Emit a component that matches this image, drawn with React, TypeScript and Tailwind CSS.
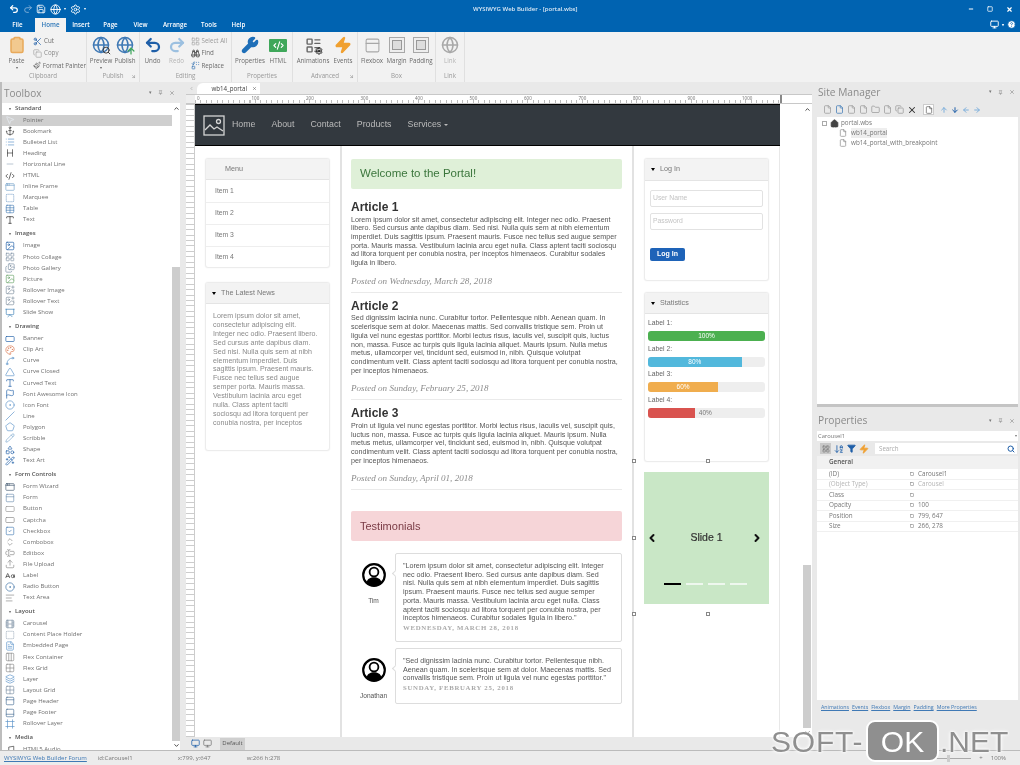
import React from "react";
import {
  MousePointer2, Anchor, List, Heading, Minus, CodeXml, AppWindow, Table, Type, Image as ImageIcon, Images, LayoutGrid, ImagePlus, Presentation,
  RectangleHorizontal, Palette, Spline, Pentagon, Flag, CircleDot, Slash, Triangle, Pencil, Shapes, WandSparkles, SquareCheck, ChevronsUpDown, TextCursorInput,
  Upload, CaseSensitive, Text, Columns3, Grid2x2, Layers, PanelTop, PanelBottom, Music, Scissors, Copy, Paintbrush, Clipboard, Globe, Search, ArrowUp, Undo2, Redo2,
  Binoculars, Replace, Wrench, Zap, House, File, Folder, X, ArrowDown, ArrowLeft, ArrowRight, Square, CircleHelp, ChevronLeft, ChevronRight, Monitor, Save, Settings,
  Filter, ArrowDownAZ, LayoutList, Pin, ChevronDown, ChevronUp, SquareDashed, Film, FileText, BoxSelect, Frame, ArrowDownRight,
} from "lucide-react";

const blue = "#1f5fa8";
const groups: { name: string; items: [string, any, string][] }[] = [
  { name: "Standard", items: [["Pointer", MousePointer2, "#e8eef5"], ["Bookmark", Anchor, "#333"], ["Bulleted List", List, "#5b93c9"], ["Heading", Heading, "#333"], ["Horizontal Line", Minus, "#9ab"], ["HTML", CodeXml, "#222"], ["Inline Frame", AppWindow, "#7aa6cc"], ["Marquee", BoxSelect, "#4a7fb5"], ["Table", Table, "#4a7fb5"], ["Text", Type, "#222"]] },
  { name: "Images", items: [["Image", ImageIcon, blue], ["Photo Collage", LayoutGrid, "#7b8fa3"], ["Photo Gallery", Images, "#7b8fa3"], ["Picture", ImageIcon, "#6aa56a"], ["Rollover Image", ImagePlus, "#7f8f9f"], ["Rollover Text", ImagePlus, "#7f8f9f"], ["Slide Show", Presentation, "#3b7fb5"]] },
  { name: "Drawing", items: [["Banner", RectangleHorizontal, blue], ["Clip Art", Palette, "#d9734a"], ["Curve", Spline, "#5b93c9"], ["Curve Closed", Triangle, "#5b93c9"], ["Curved Text", Type, blue], ["Font Awesome Icon", Flag, blue], ["Icon Font", CircleDot, "#5b93c9"], ["Line", Slash, "#5b93c9"], ["Polygon", Pentagon, "#5b93c9"], ["Scribble", Pencil, "#7aa6cc"], ["Shape", Shapes, blue], ["Text Art", WandSparkles, blue]] },
  { name: "Form Controls", items: [["Form Wizard", AppWindow, "#4a5f75"], ["Form", PanelTop, "#6f8fb0"], ["Button", RectangleHorizontal, "#999"], ["Captcha", RectangleHorizontal, "#888"], ["Checkbox", SquareCheck, "#4a7fb5"], ["Combobox", ChevronsUpDown, "#888"], ["Editbox", TextCursorInput, "#888"], ["File Upload", Upload, "#888"], ["Label", CaseSensitive, "#333"], ["Radio Button", CircleDot, "#3b6fa5"], ["Text Area", Text, "#888"]] },
  { name: "Layout", items: [["Carousel", Film, "#7b8fa3"], ["Content Place Holder", SquareDashed, "#7b8fa3"], ["Embedded Page", FileText, "#5b93c9"], ["Flex Container", Columns3, "#888"], ["Flex Grid", Grid2x2, "#888"], ["Layer", Layers, "#5b93c9"], ["Layout Grid", Grid2x2, "#7b8fa3"], ["Page Header", PanelTop, "#4a6f95"], ["Page Footer", PanelBottom, "#4a6f95"], ["Rollover Layer", Frame, "#5b93c9"]] },
  { name: "Media", items: [["HTML5 Audio", Music, "#333"]] },
];

function Toolbox() {
  return (
    <div className="flex h-full w-[180px] shrink-0 flex-col border-l-2 border-[#bdbdbd] font-['Open_Sans',sans-serif]">
      <PanelHead title="Toolbox" h="h-[21px]" size="text-[10px]" />
      <div className="flex min-h-0 flex-1">
        <div className="min-w-0 flex-1 overflow-hidden bg-white">
          {groups.map((g, gi) => (
            <div key={g.name}>
              <div className={`flex items-center pl-[7px] text-[6px] font-semibold text-[#555] ${gi === 0 ? "h-[11.5px]" : "h-[15px] pt-[2px]"}`}>
                <span className="mr-[4px] text-[4px] text-[#777]">▾</span>
                {g.name}
              </div>
              {g.items.map(([n, I, c]) => (
                <div key={n} className={`flex h-[11.1px] items-center pl-[3px] text-[6px] text-[#707070] ${n === "Pointer" ? "bg-[#cfcfcf]" : ""}`}>
                  <I size={10} color={c} strokeWidth={1.6} className="mr-[8px] shrink-0" />
                  {n}
                </div>
              ))}
            </div>
          ))}
        </div>
        <VScroll thumb="h-[164px]" />
      </div>
    </div>
  );
}

function VScroll({ thumb }: { thumb: string }) {
  return (
    <div className="flex w-[8px] shrink-0 flex-col bg-[#cdcdcd]">
      <div className={`flex flex-col items-center bg-white pt-[2px] ${thumb}`}>
        <ChevronUp size={7} strokeWidth={3} color="#333" />
      </div>
      <div className="flex-1" />
      <div className="flex h-[9px] items-center justify-center bg-white">
        <ChevronDown size={7} strokeWidth={3} color="#333" />
      </div>
    </div>
  );
}

function PanelHead({ title, h, size }: { title: string; h: string; size: string }) {
  return (
    <div className={`flex shrink-0 items-center justify-between pl-[2px] pr-[5px] ${h}`}>
      <span className={`leading-none text-[#8a8a8a] ${size}`}>{title}</span>
      <span className="flex items-center gap-[6px] text-[#777]">
        <span className="text-[5px]">▾</span>
        <Pin size={5} strokeWidth={2} />
        <X size={6} strokeWidth={2} />
      </span>
    </div>
  );
}

function Big({ label, w, children, muted, caret }: { label: string; w: string; children: React.ReactNode; muted?: boolean; caret?: boolean }) {
  return (
    <div className={`flex shrink-0 flex-col items-center ${w}`}>
      <div className="flex h-[20px] items-center justify-center">{children}</div>
      <div className={`mt-[1px] whitespace-nowrap text-[6.2px] leading-[9px] ${muted ? "text-[#b5b5b5]" : "text-[#6b6b6b]"}`}>{label}</div>
      {caret && <div className="text-[4px] leading-[5px] text-[#666]">▾</div>}
    </div>
  );
}

function Group({ label, w, children, launch }: { label: string; w: string; children: React.ReactNode; launch?: boolean }) {
  return (
    <div className={`relative flex shrink-0 flex-col border-r border-[#e0e0e0] ${w}`}>
      <div className="flex h-[39px] justify-center pt-[3px]">{children}</div>
      <div className="text-center text-[6.2px] leading-[9px] text-[#999]">{label}</div>
      {launch && <ArrowDownRight size={5} color="#777" strokeWidth={2} className="absolute bottom-[3px] right-[3px]" />}
    </div>
  );
}

function Ribbon() {
  return (
    <div className="flex h-[50px] shrink-0 bg-[#f2f2f2] font-['Open_Sans',sans-serif]">
      <Group label="Clipboard" w="w-[87px]">
        <Big label="Paste" w="w-[33px]" caret><Clipboard size={18} color="#e8a95a" fill="#f2c98f" /></Big>
        <div className="w-[53px] text-[6.2px] leading-[12.3px] text-[#6b6b6b]">
          <div className="flex items-center gap-[2px]"><Scissors size={9} color={blue} />Cut</div>
          <div className="flex items-center gap-[2px] text-[#8a8a8a]"><Copy size={9} color="#aaa" />Copy</div>
          <div className="flex items-center gap-[2px] whitespace-nowrap"><Paintbrush size={9} color="#555" />Format Painter</div>
        </div>
      </Group>
      <Group label="Publish" w="w-[53px]" launch>
        <Big label="Preview" w="w-[24px]" caret>
          <span className="relative"><Globe size={18} color="#3f79b5" /><Search size={9} color="#333" strokeWidth={2.5} className="absolute -bottom-[1px] -right-[1px]" /></span>
        </Big>
        <Big label="Publish" w="w-[24px]">
          <span className="relative"><Globe size={18} color="#3f79b5" /><ArrowUp size={10} color="#3fa75a" strokeWidth={3} className="absolute -bottom-[2px] -right-[2px]" /></span>
        </Big>
      </Group>
      <Group label="Editing" w="w-[92px]">
        <Big label="Undo" w="w-[24px]"><Undo2 size={18} color="#1f5fa8" strokeWidth={3} /></Big>
        <Big label="Redo" w="w-[24px]" muted><Redo2 size={18} color="#9cc0e0" strokeWidth={3} /></Big>
        <div className="ml-[2px] w-[40px] text-[6.2px] leading-[12.3px] text-[#6b6b6b]">
          <div className="flex items-center gap-[2px] whitespace-nowrap text-[#9a9a9a]"><LayoutGrid size={9} color="#aaa" />Select All</div>
          <div className="flex items-center gap-[2px]"><Binoculars size={9} color="#333" />Find</div>
          <div className="flex items-center gap-[2px]"><Replace size={9} color="#3f79b5" />Replace</div>
        </div>
      </Group>
      <Group label="Properties" w="w-[61px]">
        <Big label="Properties" w="w-[32px]"><Wrench size={18} color="#1f6fb8" fill="#1f6fb8" /></Big>
        <Big label="HTML" w="w-[24px]">
          <span className="flex h-[13px] w-[18px] items-center justify-center rounded-[1px] bg-[#3fa75a]"><CodeXml size={11} color="white" strokeWidth={2.5} /></span>
        </Big>
      </Group>
      <Group label="Advanced" w="w-[65px]" launch>
        <Big label="Animations" w="w-[36px]">
          <span className="relative"><LayoutList size={17} color="#666" /><Settings size={8} color="#222" strokeWidth={3} className="absolute -bottom-[1px] -right-[1px]" /></span>
        </Big>
        <Big label="Events" w="w-[24px]"><Zap size={18} color="#f0a030" fill="#f0a030" /></Big>
      </Group>
      <Group label="Box" w="w-[78px]">
        <Big label="Flexbox" w="w-[25px]"><PanelTop size={17} color="#a8a8a8" strokeWidth={1.5} /></Big>
        <Big label="Margin" w="w-[24px]"><span className="flex h-[16px] w-[16px] items-center justify-center border border-[#a8a8a8] bg-[#eee]"><span className="h-[10px] w-[10px] border border-[#999] bg-[#ddd]" /></span></Big>
        <Big label="Padding" w="w-[25px]"><span className="flex h-[16px] w-[16px] items-center justify-center border border-[#a8a8a8] bg-[#eee]"><span className="h-[10px] w-[10px] border border-[#999] bg-[#ddd]" /></span></Big>
      </Group>
      <Group label="Link" w="w-[29px]">
        <Big label="Link" w="w-[24px]" muted><Globe size={18} color="#a8a8a8" /></Big>
      </Group>
      <div className="flex-1" />
    </div>
  );
}

function TitleBar() {
  const tabs: [string, string][] = [["Insert", "w-[30px]"], ["Page", "w-[29px]"], ["View", "w-[31px]"], ["Arrange", "w-[38px]"], ["Tools", "w-[30px]"], ["Help", "w-[29px]"]];
  return (
    <div className="h-[32px] shrink-0 bg-[#0063b1] font-['Open_Sans',sans-serif] text-white">
      <div className="relative flex h-[18px] items-center pl-[9px]">
        <span className="flex items-center gap-[3.500px]">
          <Undo2 size={10} strokeWidth={3} />
          <Redo2 size={10} strokeWidth={2} color="#8fb8dc" />
          <Save size={10} strokeWidth={2} />
          <Globe size={11} strokeWidth={2} />
          <span className="text-[4px]">▾</span>
          <Settings size={11} strokeWidth={2} />
          <span className="text-[4px]">▾</span>
        </span>
        <span className="absolute left-[473px] top-[5px] whitespace-nowrap text-[6px] font-semibold leading-[9px] text-[#dce9f5]">WYSIWYG Web Builder - [portal.wbs]</span>
        <span className="ml-auto mr-[7px] flex items-center gap-[13px]">
          <Minus size={6} strokeWidth={4} />
          <Square size={6} strokeWidth={3} />
          <X size={7} strokeWidth={4} />
        </span>
      </div>
      <div className="flex h-[14px] items-end text-[6.2px] font-semibold">
        <div className="flex h-[14px] w-[35px] items-center justify-center">File</div>
        <div className="flex h-[14px] w-[31px] items-center justify-center bg-[#f2f2f2] text-[#2f78b8]">Home</div>
        {tabs.map(([t, w]) => (
          <div key={t} className={`flex h-[14px] items-center justify-center ${w}`}>{t}</div>
        ))}
        <span className="ml-auto mr-[4px] flex items-center gap-[3px] pb-[3px]">
          <Monitor size={9} strokeWidth={2.5} />
          <span className="text-[4px]">▾</span>
          <CircleHelp size={9} fill="white" color="#0063b1" strokeWidth={2} />
        </span>
      </div>
    </div>
  );
}

function Ruler() {
  const nums = [0, 100, 200, 300, 400, 500, 600, 700, 800, 900, 1000];
  return (
    <div className="flex h-[10px] shrink-0 border-y border-[#c8c8c8] bg-white">
      <div className="w-[9px] shrink-0 bg-[#eee]" />
      <div className="relative flex w-[585px] shrink-0 bg-[repeating-linear-gradient(90deg,#bbb_0,#bbb_1px,transparent_1px,transparent_5.45px)] bg-[length:100%_3px] bg-bottom bg-no-repeat pl-[2px]">
        {nums.map((n) => (
          <span key={n} className="w-[54.5px] shrink-0 text-[4.5px] leading-[6px] text-[#777]">{n}</span>
        ))}
      </div>
      <div className="h-full w-[2px] bg-[#888]" />
    </div>
  );
}

function Lines({ lines, className }: { lines: string[]; className?: string }) {
  return (
    <div className={className}>
      {lines.map((l) => (
        <div key={l} className="whitespace-nowrap">{l}</div>
      ))}
    </div>
  );
}

function Caret() {
  return <span className="mr-[5px] inline-block h-0 w-0 border-x-[2.5px] border-t-[3px] border-x-transparent border-t-black" />;
}

function Panel({ title, caret, h, head, className, children }: { title: string; caret?: boolean; h: string; head: string; className?: string; children: React.ReactNode }) {
  return (
    <div className={`w-[125px] overflow-hidden rounded-[3px] border border-[#ececec] shadow-[0_0_1px_#ddd] ${h} ${className ?? ""}`}>
      <div className={`flex items-center border-b border-[#e4e4e4] bg-[#f3f3f3] text-[7.2px] text-[#777] ${head} ${caret ? "pl-[6px]" : "pl-[19px]"}`}>
        {caret && <Caret />}
        {title}
      </div>
      {children}
    </div>
  );
}

function Article({ title, body, date }: { title: string; body: string[]; date: string }) {
  return (
    <div>
      <div className="h-[14px] text-[12px] font-bold leading-[14px] text-[#333]">{title}</div>
      <Lines lines={body} className="mt-[1.6px] text-[7.15px] leading-[8.7px] text-[#555]" />
      <div className="mt-[8px] h-[10px] font-['Liberation_Serif',serif] text-[9.1px] italic leading-[10px] text-[#8c8c8c]">{date}</div>
      <div className="mt-[6px] h-px bg-[#eaeaea]" />
      <div className="h-[6px]" />
    </div>
  );
}

function Avatar() {
  return (
    <svg width="24" height="24" viewBox="0 0 24 24">
      <circle cx="12" cy="12" r="10.800" fill="white" stroke="black" strokeWidth="2.200" />
      <circle cx="12" cy="9" r="4.400" fill="white" stroke="black" strokeWidth="1.800" />
      <path d="M4.500 19.200c1-3.600 4-5 7.500-5s6.500 1.400 7.500 5A10.500 10.500 0 0 1 4.500 19.200z" fill="black" />
    </svg>
  );
}

function Testimonial({ name, cardH, body, date }: { name: string; cardH: string; body: string[]; date: string }) {
  return (
    <div className="flex">
      <div className="flex w-[44px] shrink-0 flex-col items-center pl-[1px] pt-[10px]">
        <Avatar />
        <div className="mt-[9px] text-[6.6px] leading-[9px] text-[#555]">{name}</div>
      </div>
      <div className={`relative w-[227px] rounded-[2px] border border-[#ddd] pl-[7px] pt-[8px] ${cardH}`}>
        <span className="absolute -left-[3px] top-[17px] h-[5px] w-[5px] rotate-45 border-b border-l border-[#ddd] bg-white" />
        <Lines lines={body} className="text-[7.15px] leading-[8.7px] text-[#555]" />
        <div className="font-['Liberation_Serif',serif] text-[6.8px] font-bold uppercase leading-[10px] tracking-[0.7px] text-[#aaa]">{date}</div>
      </div>
    </div>
  );
}

function Handle({ className }: { className: string }) {
  return <span className={`absolute h-[4px] w-[4px] border border-[#888] bg-white ${className}`} />;
}

function Bar({ label, pct, color, text, textOut }: { label: string; pct: string; color: string; text: string; textOut?: boolean }) {
  return (
    <div className="mb-[1.5px]">
      <div className="h-[14px] text-[6.8px] leading-[12px] text-[#666]">{label}</div>
      <div className="relative flex h-[10px] overflow-hidden rounded-[3px] bg-[#eeeeee]">
        <div className={`flex items-center justify-center text-[6.5px] text-white ${color} ${pct}`}>{!textOut && text}</div>
        {textOut && <div className="pl-[4px] text-[6.5px] leading-[10px] text-[#777]">{text}</div>}
      </div>
    </div>
  );
}

function Page() {
  const items = ["Home", "About", "Contact", "Products"];
  return (
    <div className="relative flex h-full w-[608px] shrink-0 flex-col bg-white font-['Liberation_Sans',Arial,sans-serif]">
      <div className="flex h-[42px] w-[585px] shrink-0 items-center border-y border-black bg-[#33393f] pl-[8px] text-[8.8px] text-[#bcbcbc]">
        <svg width="22" height="21" viewBox="0 0 22 21" className="mr-[7px]" fill="none" stroke="#d5d5d5" strokeWidth="1.300">
          <rect x="1" y="1" width="20" height="19" />
          <circle cx="15.500" cy="6.500" r="2" />
          <path d="M2 15l5-5 4 4 3-2 6 4" />
        </svg>
        {items.map((t, i) => (
          <span key={t} className={i === 0 ? "" : "ml-[16px]"}>{t}</span>
        ))}
        <span className="ml-[16px]">Services</span>
        <span className="ml-[3px] h-0 w-0 border-x-[2px] border-t-[2.5px] border-x-transparent border-t-[#bbb]" />
      </div>
      <div className="flex min-h-0 w-[585px] flex-1">
        <div className="w-[145px] shrink-0 pl-[10px] pt-[12px]">
          <Panel title="Menu" h="h-[110px]" head="h-[21px]">
            {["Item 1", "Item 2", "Item 3", "Item 4"].map((t, i) => (
              <div key={t} className={`flex h-[22px] items-center pl-[9px] text-[6.8px] text-[#777] ${i ? "border-t border-[#eee]" : ""}`}>{t}</div>
            ))}
          </Panel>
          <Panel title="The Latest News" caret h="h-[169px]" head="h-[21px]" className="mt-[14px]">
            <Lines
              className="px-[7px] pt-[8px] text-[7.100px] leading-[8.900px] text-[#8a8a8a]"
              lines={["Lorem ipsum dolor sit amet,", "consectetur adipiscing elit.", "Integer nec odio. Praesent libero.", "Sed cursus ante dapibus diam.", "Sed nisi. Nulla quis sem at nibh", "elementum imperdiet. Duis", "sagittis ipsum. Praesent mauris.", "Fusce nec tellus sed augue", "semper porta. Mauris massa.", "Vestibulum lacinia arcu eget", "nulla. Class aptent taciti", "sociosqu ad litora torquent per", "conubia nostra, per inceptos"]}
            />
          </Panel>
        </div>
        <div className="w-[294px] shrink-0 border-x-2 border-[#e2e2e2] pl-[9px] pr-[10px] pt-[13px]">
          <div className="flex h-[30px] items-center rounded-[2px] bg-[#dff0d8] pl-[9px] text-[11.500px] text-[#3c763d]">Welcome to the Portal!</div>
          <div className="h-[11px]" />
          <Article
            title="Article 1"
            date="Posted on Wednesday, March 28, 2018"
            body={["Lorem ipsum dolor sit amet, consectetur adipiscing elit. Integer nec odio. Praesent", "libero. Sed cursus ante dapibus diam. Sed nisi. Nulla quis sem at nibh elementum", "imperdiet. Duis sagittis ipsum. Praesent mauris. Fusce nec tellus sed augue semper", "porta. Mauris massa. Vestibulum lacinia arcu eget nulla. Class aptent taciti sociosqu", "ad litora torquent per conubia nostra, per inceptos himenaeos. Curabitur sodales", "ligula in libero."]}
          />
          <Article
            title="Article 2"
            date="Posted on Sunday, February 25, 2018"
            body={["Sed dignissim lacinia nunc. Curabitur tortor. Pellentesque nibh. Aenean quam. In", "scelerisque sem at dolor. Maecenas mattis. Sed convallis tristique sem. Proin ut", "ligula vel nunc egestas porttitor. Morbi lectus risus, iaculis vel, suscipit quis, luctus", "non, massa. Fusce ac turpis quis ligula lacinia aliquet. Mauris ipsum. Nulla metus", "metus, ullamcorper vel, tincidunt sed, euismod in, nibh. Quisque volutpat", "condimentum velit. Class aptent taciti sociosqu ad litora torquent per conubia nostra,", "per inceptos himenaeos."]}
          />
          <Article
            title="Article 3"
            date="Posted on Sunday, April 01, 2018"
            body={["Proin ut ligula vel nunc egestas porttitor. Morbi lectus risus, iaculis vel, suscipit quis,", "luctus non, massa. Fusce ac turpis quis ligula lacinia aliquet. Mauris ipsum. Nulla", "metus metus, ullamcorper vel, tincidunt sed, euismod in, nibh. Quisque volutpat", "condimentum velit. Class aptent taciti sociosqu ad litora torquent per conubia nostra,", "per inceptos himenaeos."]}
          />
          <div className="mt-[14.600px] flex h-[30px] items-center rounded-[2px] bg-[#f6d5d8] pl-[9px] text-[11px] text-[#7a3b45]">Testimonials</div>
          <div className="mt-[12px] flex flex-col gap-[6px]">
            <Testimonial
              name="Tim"
              cardH="h-[89px]"
              date="Wednesday, March 28, 2018"
              body={["\"Lorem ipsum dolor sit amet, consectetur adipiscing elit. Integer", "nec odio. Praesent libero. Sed cursus ante dapibus diam. Sed", "nisi. Nulla quis sem at nibh elementum imperdiet. Duis sagittis", "ipsum. Praesent mauris. Fusce nec tellus sed augue semper", "porta. Mauris massa. Vestibulum lacinia arcu eget nulla. Class", "aptent taciti sociosqu ad litora torquent per conubia nostra, per", "inceptos himenaeos. Curabitur sodales ligula in libero.\""]}
            />
            <Testimonial
              name="Jonathan"
              cardH="h-[56px]"
              date="Sunday, February 25, 2018"
              body={["\"Sed dignissim lacinia nunc. Curabitur tortor. Pellentesque nibh.", "Aenean quam. In scelerisque sem at dolor. Maecenas mattis. Sed", "convallis tristique sem. Proin ut ligula vel nunc egestas porttitor.\""]}
            />
          </div>
        </div>
        <div className="relative flex-1 border-r border-[#e8e8e8] pl-[10px] pt-[12px]">
          <Panel title="Log In" caret h="h-[123px]" head="h-[22px]">
            <div className="flex flex-col gap-[6px] px-[5px] pt-[9px]">
              {["User Name", "Password"].map((t) => (
                <div key={t} className="flex h-[17px] items-center rounded-[2px] border border-[#e2e2e2] pl-[2px] text-[6.8px] text-[#c4c4c4]">{t}</div>
              ))}
            </div>
            <div className="ml-[5px] mt-[18px] flex h-[13px] w-[35px] items-center justify-center rounded-[2px] bg-[#1e63b8] text-[7px] font-bold text-white">Log In</div>
          </Panel>
          <Panel title="Statistics" caret h="h-[170px]" head="h-[21px]" className="mt-[11px]">
            <div className="px-[3px] pt-[3px]">
              <Bar label="Label 1:" pct="w-full" color="bg-[#4cb050]" text="100%" />
              <Bar label="Label 2:" pct="w-[80%]" color="bg-[#52b8dc]" text="80%" />
              <Bar label="Label 3:" pct="w-[60%]" color="bg-[#f0ad4e]" text="60%" />
              <Bar label="Label 4:" pct="w-[40%]" color="bg-[#d9534f]" text="40%" textOut />
            </div>
          </Panel>
          <div className="relative mt-[10px] flex h-[132px] w-[125px] items-center justify-center bg-[#c9e7c6] text-[10.500px] text-[#333] [-webkit-text-stroke:0.2px_#333]">
            Slide 1
            <ChevronLeft size={12} strokeWidth={4} color="#111" className="absolute left-[2px] top-[60px]" />
            <ChevronRight size={12} strokeWidth={4} color="#111" className="absolute right-[6px] top-[60px]" />
            <div className="absolute left-[20px] top-[111px] flex gap-[5px]">
              <span className="h-[1.500px] w-[17px] bg-black" />
              <span className="h-[1.500px] w-[17px] bg-[#eef7ee]" />
              <span className="h-[1.500px] w-[17px] bg-[#eef7ee]" />
              <span className="h-[1.500px] w-[17px] bg-[#eef7ee]" />
            </div>
          </div>
          <Handle className="-left-[2px] top-[313px]" />
          <Handle className="left-[72px] top-[313px]" />
          <Handle className="-left-[2px] top-[390px]" />
          <Handle className="-left-[2px] top-[466px]" />
          <Handle className="left-[72px] top-[466px]" />
        </div>
      </div>
    </div>
  );
}

function Center() {
  return (
    <div className="ml-[6px] flex h-full w-[626px] shrink-0 flex-col">
      <div className="flex h-[12px] shrink-0 items-end font-['Open_Sans',sans-serif]">
        <div className="flex h-full w-[11px] items-center justify-center"><ChevronLeft size={5} color="#888" /></div>
        <div className="flex h-[11px] w-[63px] items-center justify-end gap-[5px] rounded-tl-[6px] bg-white pr-[3px] text-[6.200px] text-[#444]">
          wb14_portal <X size={5} strokeWidth={2} />
        </div>
      </div>
      <Ruler />
      <div className="flex min-h-0 flex-1 bg-white">
        <div className="w-[9px] shrink-0 border-r border-[#ccc] bg-[repeating-linear-gradient(0deg,#ccc_0,#ccc_1px,#fff_1px,#fff_5.45px)]" />
        <div className="h-full w-[608px] shrink-0"><Page /></div>
        <VScroll thumb="h-[461px]" />
      </div>
      <div className="flex h-[13px] shrink-0 items-center gap-[3px] pl-[5px] font-['Open_Sans',sans-serif]">
        <Monitor size={9} color={blue} />
        <Monitor size={9} color="#777" />
        <div className="ml-[5px] flex h-[12px] w-[25px] items-center justify-center bg-[#cfcfcf] text-[6px] text-[#555]">Default</div>
      </div>
    </div>
  );
}

function RightPanels() {
  const tb = [File, File, File, File, Folder, File, Copy];
  const rows: [string, string, boolean?][] = [["(ID)", "Carousel1"], ["(Object Type)", "Carousel", true], ["Class", ""], ["Opacity", "100"], ["Position", "799, 647"], ["Size", "266, 278"]];
  return (
    <div className="ml-[3px] flex h-full flex-1 flex-col font-['Open_Sans',sans-serif]">
      <div className="pl-[1px]"><PanelHead title="Site Manager" h="h-[20px]" size="text-[10.200px]" /></div>
      <div className="flex h-[15px] shrink-0 items-center gap-[3px] pl-[8px]">
        {tb.map((I, i) => <I key={i} size={9} color={i === 1 ? "#3f79b5" : "#999"} />)}
        <X size={10} strokeWidth={2.500} color="#333" />
        <span className="mx-[3px] flex h-[11px] w-[11px] items-center justify-center border border-[#ccc] bg-white"><File size={8} color="#555" /></span>
        <ArrowUp size={8} strokeWidth={3} color="#7fb0dc" />
        <ArrowDown size={8} strokeWidth={3} color={blue} />
        <ArrowLeft size={8} strokeWidth={3} color="#7fb0dc" />
        <ArrowRight size={8} strokeWidth={3} color="#7fb0dc" />
      </div>
      <div className="ml-[2px] mr-[2px] h-[290px] shrink-0 border-b-[3px] border-[#c4c4c4] bg-white pl-[5px] pt-[1px] text-[6.300px] leading-[10px] text-[#777]">
        <div className="flex h-[10px] items-center gap-[2px]">
          <span className="mr-[1px] h-[5px] w-[5px] border border-[#aaa]" />
          <House size={9} color="#444" fill="#444" />
          portal.wbs
        </div>
        <div className="ml-[17px] flex h-[10px] items-center gap-[4px]"><File size={8} color="#888" /><span className="bg-[#eeeeee]">wb14_portal</span></div>
        <div className="ml-[17px] flex h-[10px] items-center gap-[4px]"><File size={8} color="#888" />wb14_portal_with_breakpoint</div>
      </div>
      <div className="pl-[1px]"><PanelHead title="Properties" h="h-[24px] pt-[3px]" size="text-[10.200px]" /></div>
      <div className="ml-[2px] mr-[2px] flex h-[10px] shrink-0 items-center justify-between bg-white px-[1px] text-[5.800px] text-[#777]">
        Carousel1 <span className="text-[4px]">▾</span>
      </div>
      <div className="flex h-[15px] shrink-0 items-center gap-[3px] pl-[5px]">
        <span className="flex h-[11px] w-[11px] items-center justify-center bg-[#c8c8c8]"><LayoutGrid size={8} color="#777" /></span>
        <ArrowDownAZ size={10} color={blue} />
        <Filter size={9} color={blue} fill={blue} />
        <Zap size={10} color="#f0a030" fill="#f0a030" />
        <div className="ml-[3px] mr-[3px] flex h-[11px] flex-1 items-center justify-between bg-white pl-[4px] pr-[2px] text-[6.200px] text-[#aaa]">
          Search <Search size={8} color={blue} strokeWidth={3} />
        </div>
      </div>
      <div className="ml-[2px] mr-[2px] h-[244px] shrink-0 bg-white text-[6.300px] leading-[10.500px] text-[#777]">
        <div className="flex h-[13px] items-center bg-[#f1f1f1] pl-[12px] font-semibold text-[#555]">General</div>
        {rows.map(([a, b, m]) => (
          <div key={a} className={`flex h-[10.500px] items-center border-b border-[#f0f0f0] pl-[12px] ${m ? "text-[#b5b5b5]" : ""}`}>
            <span className="w-[81px]">{a}</span>
            <Square size={4} color="#777" strokeWidth={3} />
            <span className="ml-[4px]">{b}</span>
          </div>
        ))}
      </div>
      <div className="flex h-[16px] shrink-0 items-center gap-[3px] pl-[6px] text-[5.300px] text-[#3f79b5] underline">
        <span>Animations</span><span>Events</span><span>Flexbox</span><span>Margin</span><span>Padding</span><span>More Properties</span>
      </div>
    </div>
  );
}

function StatusBar() {
  return (
    <div className="flex h-[15px] shrink-0 items-center border-t border-[#bbb] bg-[#ececec] pl-[4px] font-['Open_Sans',sans-serif] text-[6px] text-[#777]">
      <span className="text-[#3f79b5] underline">WYSIWYG Web Builder Forum</span>
      <span className="ml-[11px]">id:Carousel1</span>
      <span className="ml-[45px]">x:799, y:647</span>
      <span className="ml-[36px]">w:266 h:278</span>
      <span className="ml-auto mr-[14px] flex items-center gap-[8px]">
        <span>−</span>
        <span className="relative h-px w-[44px] bg-[#aaa]"><span className="absolute left-[20px] -top-[3px] h-[7px] w-[3px] bg-[#ccc]" /></span>
        <span>+</span>
        <span>100%</span>
      </span>
    </div>
  );
}

export default function App() {
  return (
    <div className="relative flex h-[765px] w-[1020px] flex-col overflow-hidden bg-[#e9e9e9] blur-[0.7px]">
      <TitleBar />
      <Ribbon />
      <div className="flex h-[668px] shrink-0">
        <Toolbox />
        <Center />
        <RightPanels />
      </div>
      <StatusBar />
      <div className="absolute left-[771px] top-[719px] flex items-center font-['Liberation_Sans',Arial,sans-serif] text-[30px] leading-[41px] text-[#8f8f8f] [text-shadow:0_0_2px_white,0_0_3px_white,0_0_4px_white]">
        <span className="w-[95px] pt-[2px] tracking-[0.8px]">SOFT-</span>
        <span className="flex h-[42px] w-[73px] items-center justify-center rounded-[9px] border-[2px] border-white bg-[#8f8f8f] pt-[2px] text-white [text-shadow:none]">OK</span>
        <span className="ml-[1px] pt-[2px]">.NET</span>
      </div>
    </div>
  );
}
